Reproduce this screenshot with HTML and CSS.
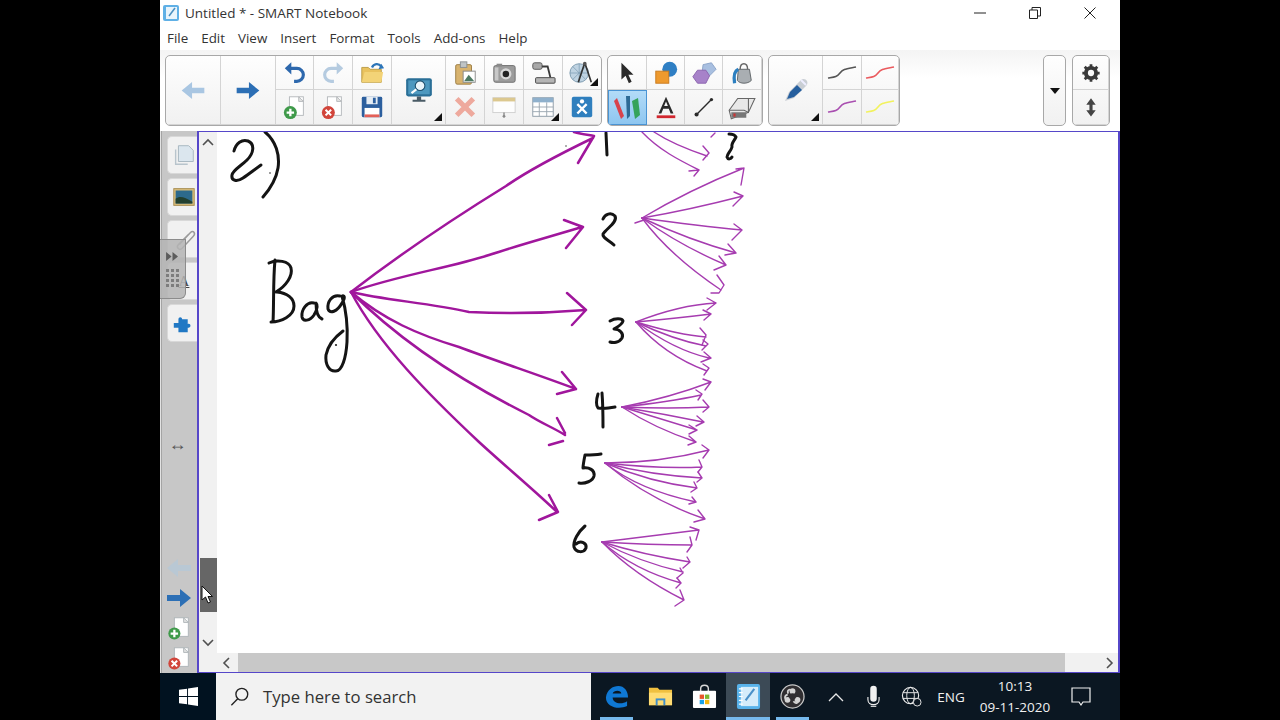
FILE: index.html
```html
<!DOCTYPE html>
<html lang="en">
<head>
<meta charset="utf-8">
<title>Untitled * - SMART Notebook</title>
<link rel="stylesheet" href="styles.css">
</head>
<body>
<svg class="defs" xmlns="http://www.w3.org/2000/svg">
  <symbol id="arrow" viewBox="0 0 24 18"><path d="M0 6H13V0L24 9L13 18V12H0Z"/></symbol>
  <symbol id="squiggle" viewBox="0 0 32 18"><path d="M2 14C8 13 11 13 14 9C17 5 20 5 30 3" fill="none" stroke="currentColor" stroke-width="1.6"/></symbol>
</svg>
<div class="window">
  <header class="title-bar">
    <svg class="app-ic" viewBox="0 0 18 18"><rect x="1" y="1" width="16" height="16" rx="2" fill="#5fb0e6"/><rect x="4" y="3" width="11" height="12" fill="#e8f4fc"/><path d="M7 12L13 4" stroke="#4a8fc0" stroke-width="1.6"/></svg>
    <span class="title-text">Untitled * - SMART Notebook</span>
    <div class="caption">
      <button class="cap"><svg viewBox="0 0 12 12"><path d="M0 6H12" stroke="#222" fill="none"/></svg></button>
      <button class="cap"><svg viewBox="0 0 12 12"><path d="M.5 3H8.5V11.500H.5ZM3 3V.5H11.500V9H8.500" stroke="#222" fill="none"/></svg></button>
      <button class="cap"><svg viewBox="0 0 12 12"><path d="M.5.5L11.500 11.500M11.500.5L.5 11.500" stroke="#222" fill="none"/></svg></button>
    </div>
  </header>
  <nav class="menu">
    <span>File</span><span>Edit</span><span>View</span><span>Insert</span><span>Format</span><span>Tools</span><span>Add-ons</span><span>Help</span>
  </nav>
  <div class="toolbar">
    <div class="group g1">
      <div class="c r2"><svg class="ic-arrow pale"><use href="#arrow"/></svg></div>
      <div class="c r2"><svg class="ic-arrow blue"><use href="#arrow"/></svg></div>
      <div class="c"><svg class="ic" viewBox="0 0 28 28"><path d="M9 9H16A6.500 6.500 0 0 1 16 23H13" fill="none" stroke="#2d68ad" stroke-width="3.400"/><path d="M10 2.500L3 9L10 15.500Z" fill="#2d68ad"/></svg></div>
      <div class="c"><svg class="ic" viewBox="0 0 28 28"><path d="M19 9H12A6.500 6.500 0 0 0 12 23H15" fill="none" stroke="#b5cbe0" stroke-width="3.400"/><path d="M18 2.500L25 9L18 15.500Z" fill="#b5cbe0"/></svg></div>
      <div class="c"><svg class="ic" viewBox="0 0 28 28"><path d="M3 8H10L12 10H24V24H3Z" fill="#e9c25e" stroke="#b99a45"/><path d="M3 24L6 13H26L24 24Z" fill="#f3d377"/><path d="M14 8C16 4 21 3 24 7" fill="none" stroke="#2d75b8" stroke-width="2.500"/><path d="M21 10L27 9L24 4Z" fill="#2d75b8"/></svg></div>
      <div class="c r2"><svg class="ic ic-lg" viewBox="0 0 28 28"><rect x="2" y="3" width="24" height="17" rx="2" fill="#2a6f97"/><rect x="4" y="5" width="20" height="13" fill="#4d98bf"/><circle cx="15" cy="10" r="4.500" fill="#eaf5fa" stroke="#1d4f6d"/><path d="M11.500 13.500L7 17" stroke="#fff" stroke-width="2"/><path d="M12 20H16V23H20V25H8V23H12Z" fill="#4a5b66"/></svg><i class="tri"></i></div>
      <div class="c"><svg class="ic" viewBox="0 0 28 28"><rect x="4" y="5" width="17" height="21" rx="1.500" fill="#d8b36e" stroke="#9a7c42"/><rect x="9" y="2" width="7" height="6" fill="#bfc4c6" stroke="#8a8f92"/><rect x="12" y="12" width="13" height="12" fill="#fff" stroke="#888"/><path d="M13 23L18 16L24 23Z" fill="#4c7a63"/></svg></div>
      <div class="c"><svg class="ic" viewBox="0 0 28 28"><rect x="3" y="6" width="23" height="18" rx="2" fill="#9c9c9c" stroke="#6e6e6e"/><rect x="6" y="4" width="6" height="3" fill="#8a8a8a"/><circle cx="16" cy="15" r="6" fill="#d8d8d8"/><circle cx="16" cy="15" r="3.500" fill="#222"/><rect x="4" y="8" width="4" height="14" fill="#c8c8c8"/></svg></div>
      <div class="c"><svg class="ic" viewBox="0 0 28 28"><rect x="3" y="3" width="10" height="7" rx="2" fill="#a8a8a8" stroke="#555"/><path d="M13 7H19L22 19" fill="none" stroke="#3a3a3a" stroke-width="2"/><rect x="6" y="19" width="21" height="6" rx="1" fill="#b5b5b5" stroke="#444"/></svg></div>
      <div class="c"><svg class="ic" viewBox="0 0 28 28"><circle cx="11" cy="14" r="10" fill="#bfd3e2" stroke="#7a98ad"/><path d="M1 14H21M11 4V24M4 7L18 21M18 7L4 21" stroke="#7d9db3" stroke-width=".8"/><path d="M17 3L10 24M17 3L24 24" stroke="#333" stroke-width="1.800" fill="none"/><circle cx="17" cy="4" r="2" fill="#555"/></svg><i class="tri"></i></div>
      <div class="c"><svg class="ic" viewBox="0 0 28 28"><rect x="8" y="3" width="15" height="20" fill="#fff" stroke="#b4b8bb"/><path d="M18 3L23 8H18Z" fill="#e4e4e4" stroke="#b4b8bb"/><circle cx="9" cy="20" r="7" fill="#3f9a4a"/><path d="M9 16V24M5 20H13" stroke="#fff" stroke-width="2.500"/></svg></div>
      <div class="c"><svg class="ic" viewBox="0 0 28 28"><rect x="8" y="3" width="15" height="20" fill="#fff" stroke="#b4b8bb"/><path d="M18 3L23 8H18Z" fill="#e4e4e4" stroke="#b4b8bb"/><circle cx="9" cy="20" r="7" fill="#d1453b"/><path d="M6 17L12 23M12 17L6 23" stroke="#fff" stroke-width="2.200"/></svg></div>
      <div class="c"><svg class="ic" viewBox="0 0 28 28"><rect x="3" y="3" width="22" height="22" rx="1.500" fill="#2c5f9e"/><rect x="8" y="3" width="12" height="8" fill="#e6edf4"/><rect x="15" y="4" width="3" height="6" fill="#2c5f9e"/><rect x="6" y="15" width="16" height="10" fill="#fff"/><rect x="6" y="22" width="16" height="3" fill="#e36058"/></svg></div>
      <div class="c"><svg class="ic" viewBox="0 0 28 28"><path d="M7 7L21 21M21 7L7 21" stroke="#eea99d" stroke-width="5.500" stroke-linecap="square"/></svg></div>
      <div class="c"><svg class="ic" viewBox="0 0 28 28"><rect x="2" y="4" width="24" height="16" fill="#fdfdfd" stroke="#cfcfcf"/><rect x="2" y="4" width="24" height="4" fill="#dcc88f"/><path d="M14 20V25" stroke="#8a8a8a" stroke-width="1.500"/><circle cx="14" cy="24" r="1.500" fill="#888"/></svg></div>
      <div class="c"><svg class="ic" viewBox="0 0 28 28"><rect x="3" y="4" width="22" height="20" fill="#fff" stroke="#8c9aa6"/><rect x="3" y="4" width="22" height="5" fill="#8fb0cc"/><path d="M3 14H25M3 19H25M10 9V24M18 9V24" stroke="#9aa6b0"/></svg><i class="tri"></i></div>
      <div class="c"><svg class="ic" viewBox="0 0 28 28"><rect x="3" y="3" width="22" height="22" rx="2" fill="#2f7fbe"/><path d="M9 11L19 21M19 11L9 21" stroke="#fff" stroke-width="2.600"/><circle cx="14" cy="8" r="2.300" fill="#fff"/></svg></div>
    </div>
    <div class="group g2">
      <div class="c"><svg class="ic" viewBox="0 0 28 28"><path d="M8 3L8 21L12.500 17L16 25L19 23.500L15.500 16H21Z" fill="#2b2b2b"/></svg></div>
      <div class="c"><svg class="ic" viewBox="0 0 28 28"><circle cx="18" cy="10" r="8" fill="#2f7fc4"/><rect x="3" y="12" width="14" height="13" fill="#ee9a2e" stroke="#c97a1c"/></svg></div>
      <div class="c"><svg class="ic" viewBox="0 0 28 28"><path d="M13 5L22 3L27 10L20 17L12 13Z" fill="#a8bfe0" stroke="#8aa3c8"/><path d="M7 11H16L20 17L16 25H7L2 18Z" fill="#a782c9" stroke="#8a62ad"/></svg></div>
      <div class="c"><svg class="ic" viewBox="0 0 28 28"><path d="M10 10H22L24 22C20 26 12 26 9 22Z" fill="#a9aeb2" stroke="#5d6266"/><path d="M12 10C12 2 20 2 20 10" fill="none" stroke="#666" stroke-width="1.500"/><path d="M10 10C5 12 5 18 6 25" fill="none" stroke="#2c7fc0" stroke-width="3.500"/></svg></div>
      <div class="c on"><svg class="ic ic-lg" viewBox="0 0 30 30"><path d="M5 6L12 24L9 27L2 9Z" fill="#d8434c"/><path d="M14 4L18 4L18 24L15 27Z" fill="#2d6a95"/><path d="M26 6L28 23L23 27L20 9Z" fill="#35a35a"/></svg></div>
      <div class="c"><svg class="ic" viewBox="0 0 28 28"><path d="M14 3L22 21H19L17 16H11L9 21H6ZM12 13H16L14 8Z" fill="#2a2a2a"/><rect x="4" y="23" width="20" height="3" fill="#d1262e"/></svg></div>
      <div class="c"><svg class="ic" viewBox="0 0 28 28"><path d="M6 22L22 6" stroke="#2a2a2a" stroke-width="1.500"/><circle cx="6" cy="22" r="2.200" fill="#2a2a2a"/><circle cx="22" cy="6" r="1.800" fill="#2a2a2a"/></svg></div>
      <div class="c"><svg class="ic ic-lg" viewBox="0 0 28 28"><path d="M2 17L10 6H26L20 19L4 25Z" fill="#e8e8e8" stroke="#666"/><path d="M2 17H16L20 19V6" fill="none" stroke="#666"/><path d="M4 19V24L18 24L18 19Z" fill="#777"/><rect x="6" y="20" width="2" height="3" fill="#c33"/></svg></div>
    </div>
    <div class="group g3">
      <div class="c r2"><svg class="ic ic-lg" viewBox="0 0 30 30"><path d="M4 26L8 17L20 5C22 3 25 4 26 6C27 8 26 10 25 11L13 23Z" fill="#c9ced4"/><path d="M6 24L9 17L16 10L21 15L13 22Z" fill="#265f9e"/><path d="M20 5L25 10" stroke="#eef" stroke-width="2"/></svg><i class="tri"></i></div>
      <div class="c"><svg class="sq dark"><use href="#squiggle"/></svg></div>
      <div class="c"><svg class="sq red"><use href="#squiggle"/></svg></div>
      <div class="c"><svg class="sq purple"><use href="#squiggle"/></svg></div>
      <div class="c"><svg class="sq yellow"><use href="#squiggle"/></svg></div>
    </div>
    <div class="spacer"></div>
    <div class="group g4"><i class="caret"></i></div>
    <div class="group g5">
      <div class="c"><svg class="ic ic-sm" viewBox="0 0 28 28"><circle cx="14" cy="14" r="6.500" fill="none" stroke="#3a3a3a" stroke-width="5"/><path d="M14 3V25M3 14H25M6 6L22 22M22 6L6 22" stroke="#3a3a3a" stroke-width="3.500"/><circle cx="14" cy="14" r="4" fill="#fafafa"/></svg></div>
      <div class="c"><svg class="ic ic-sm" viewBox="0 0 28 28"><path d="M14 3L20 11H16V18H20L14 26L8 18H12V11H8Z" fill="#444"/></svg></div>
    </div>
  </div>
  <main class="main">
    <aside class="side">
      <div class="tabs">
        <div class="tab"><svg class="ic" viewBox="0 0 28 28"><path d="M8 4H19L24 9V21H8Z" fill="#dbe6ee" stroke="#a5b4be"/><path d="M5 8V24H18" fill="none" stroke="#b8c4cc" stroke-width="1.500"/></svg></div>
        <div class="tab"><svg class="ic" viewBox="0 0 28 28"><rect x="3" y="5" width="22" height="18" fill="#d8bc7a" stroke="#a78c4f"/><rect x="5" y="7" width="18" height="14" fill="#2d6a8c"/><path d="M5 21V16C10 12 15 15 23 19V21Z" fill="#22402f"/></svg></div>
        <div class="tab"><svg class="ic" viewBox="0 0 28 28"><path d="M9 20L21 7C24 4 27 8 24 11L12 24C9 27 5 23 8 20L19 9" fill="none" stroke="#9a9a9a" stroke-width="1.600"/></svg></div>
        <div class="tab"><span class="tab-a">A</span></div>
        <div class="tab"><svg class="ic" viewBox="0 0 28 28"><path d="M3 14H8V10C8 7 12 7 12 10H18V15C22 14 22 20 18 19V24H8V19H3Z" fill="#2178c4"/></svg></div>
      </div>
      <div class="handle">
        <svg class="ff" viewBox="0 0 14 12"><path d="M0 1L6 6L0 11ZM7 1L13 6L7 11Z" fill="#5c5c5c"/></svg>
        <div class="dots"><i></i><i></i><i></i><i></i><i></i><i></i><i></i><i></i><i></i><i></i><i></i><i></i></div>
      </div>
      <div class="side-mid"><span class="lr">↔</span></div>
      <div class="nav"><svg class="ic-arrow pale2"><use href="#arrow"/></svg></div>
      <div class="nav"><svg class="ic-arrow blue"><use href="#arrow"/></svg></div>
      <div class="nav"><svg class="ic" viewBox="0 0 28 28"><rect x="9" y="3" width="15" height="20" fill="#fff" stroke="#aeb4b8"/><path d="M19 3L24 8H19Z" fill="#e4e4e4" stroke="#aeb4b8"/><circle cx="9" cy="20" r="6.500" fill="#3f9a4a"/><path d="M9 16V24M5 20H13" stroke="#fff" stroke-width="2.400"/></svg></div>
      <div class="nav"><svg class="ic" viewBox="0 0 28 28"><rect x="9" y="3" width="15" height="20" fill="#fff" stroke="#aeb4b8"/><path d="M19 3L24 8H19Z" fill="#e4e4e4" stroke="#aeb4b8"/><circle cx="9" cy="20" r="6.500" fill="#d1453b"/><path d="M6 17L12 23M12 17L6 23" stroke="#fff" stroke-width="2.200"/></svg></div>
    </aside>
    <section class="canvas">
      <div class="vscroll">
        <svg class="chev" viewBox="0 0 12 12"><path d="M1 8L6 3L11 8" fill="none" stroke="#505050" stroke-width="1.600"/></svg>
        <div class="thumb">
          <svg class="cursor" viewBox="0 0 12 19"><path d="M1 1V15L4.500 12L7 18L9.500 17L7 11.500H11.500Z" fill="#fff" stroke="#111"/></svg>
        </div>
        <svg class="chev" viewBox="0 0 12 12"><path d="M1 4L6 9L11 4" fill="none" stroke="#505050" stroke-width="1.600"/></svg>
      </div>
      <svg class="ink" viewBox="218 132 899 521">
        <g class="black">
          <path d="M235 151C237 143 243 139 249 141C256 144 255 153 248 160C242 166 234 170 233 175C232 181 238 182 244 178C250 174 255 170 262 165"/>
          <path d="M266 132C277 141 281 155 279 168C277 180 271 189 264 197"/>
          <path d="M270 263C278 259 290 261 292 268C294 276 287 286 277 292M276 260C274 280 275 305 274 322M272 322C282 322 295 316 295 306C295 298 288 293 278 292"/>
          <path d="M315 303C308 301 302 310 303 317C304 322 311 321 315 315C318 310 319 305 317 303C317 310 318 317 323 319"/>
          <path d="M341 296C333 294 328 302 329 309C331 314 338 312 343 303C347 297 345 295 343 296C347 310 349 325 348 342C347 358 343 371 337 371C330 372 326 364 327 355C329 345 336 337 344 331"/>
          <path d="M607 133L608 155"/>
          <path d="M604 219C606 214 612 212 616 216C619 222 608 228 604 234C603 238 610 240 615 245" />
          <path d="M611 321C616 318 623 318 624 321C623 325 618 327 615 329C621 329 625 334 623 338C620 343 614 343 611 342"/>
          <path d="M599 394C597 400 597 406 599 408C604 409 611 408 616 407M603 393C604 405 604 416 604 427"/>
          <path d="M602 454C596 455 590 455 586 455C585 460 584 465 584 468C590 467 596 470 595 476C594 481 586 484 580 483"/>
          <path d="M586 526C579 532 574 541 575 547C577 553 585 553 587 548C588 543 582 540 577 544"/>
          <path d="M730 134C733 134 736 135 737 137C736 140 732 143 733 147C732 151 728 154 728 157C729 160 732 159 733 157"/>
        </g>
        <circle class="speck" cx="337" cy="345" r="1.100"/>
        <circle class="speck" cx="271" cy="173" r=".8"/>
        <circle class="speck" cx="567" cy="146" r=".7"/>
        <g class="main-arrow">
          <path d="M352 292C400 255 460 215 507 186C530 170 565 152 594 138M575 132C582 134 590 135 595 136L579 163"/>
          <path d="M352 292C400 275 450 268 490 255C520 245 550 237 583 227M565 220L584 227L567 248"/>
          <path d="M352 292C385 300 430 303 470 312C510 314 550 313 587 310M568 293L587 310L573 325"/>
          <path d="M352 292C385 320 420 335 460 347C500 362 540 375 577 389M563 372L577 389L558 394"/>
          <path d="M352 292C395 335 450 375 530 415C540 422 555 428 566 435M558 418L566 433M550 445L564 441"/>
          <path d="M352 292C380 345 430 395 480 442C505 465 535 490 558 512M550 495L559 512L540 520"/>
        </g>
        <g class="fan">
          <path d="M643 132C660 150 680 160 700 170M690 171L700 170L695 176"/>
          <path d="M655 132C670 142 690 150 708 156M704 146L710 153L704 160"/>
          <path d="M712 137L716 133"/>
          <path d="M643 218Q690 190 745 168M737 169L745 168L742 185"/>
          <path d="M643 218Q690 210 744 196M735 192L744 196L734 206"/>
          <path d="M643 218Q700 226 743 230M735 224L743 230L733 240"/>
          <path d="M643 218Q690 240 737 253M729 244L737 253L726 255"/>
          <path d="M643 218Q680 245 727 265M720 256L727 265L715 270"/>
          <path d="M643 218Q670 255 722 290M718 275L725 285L720 293L712 293"/>
          <path d="M636 223L645 220"/>
          <path d="M637 322Q680 305 717 303M708 298L717 303L708 310"/>
          <path d="M637 322Q680 318 712 314M704 310L712 314L705 320"/>
          <path d="M637 322Q680 335 707 337M701 328L707 335L703 345"/>
          <path d="M637 322Q675 340 707 346M704 340L709 344L703 350"/>
          <path d="M637 322Q675 350 710 358M705 352L712 358L702 362"/>
          <path d="M637 322Q665 355 708 371M704 364L710 368L705 375"/>
          <path d="M623 407Q670 398 712 382M704 379L712 382L706 390"/>
          <path d="M623 407Q670 402 702 395M697 390L703 394L699 400"/>
          <path d="M623 407Q670 409 709 407M704 400L710 407L704 412"/>
          <path d="M623 407Q665 414 704 422M698 416L705 422L697 426"/>
          <path d="M623 407Q665 420 698 430M690 425L698 430L690 434"/>
          <path d="M623 407Q655 428 697 442M690 436L697 442L689 445"/>
          <path d="M606 463Q660 463 710 450M703 445L710 450L704 458"/>
          <path d="M606 463Q660 469 703 467M700 460L703 467L699 472"/>
          <path d="M606 463Q650 475 703 478M699 472L703 478L698 482"/>
          <path d="M606 463Q650 482 698 488M695 482L698 488L692 492"/>
          <path d="M606 463Q640 490 697 502M693 497L697 502L690 504"/>
          <path d="M606 463Q650 500 706 519M699 510L706 519L695 522"/>
          <path d="M603 542Q650 536 700 530M691 527L700 530L697 540"/>
          <path d="M603 542Q650 545 693 545M691 537L693 545L688 552"/>
          <path d="M603 542Q645 555 691 562M688 557L691 562L684 568"/>
          <path d="M603 542Q640 562 684 572M681 568L684 573L678 578"/>
          <path d="M603 542Q635 570 682 583M678 578L682 583L677 588"/>
          <path d="M603 542Q635 575 685 600M681 590L685 600L676 606"/>
        </g>
      </svg>
      <div class="hscroll">
        <svg class="chev-h" viewBox="0 0 12 12"><path d="M8 1L3 6L8 11" fill="none" stroke="#505050" stroke-width="1.600"/></svg>
        <div class="htrack"></div>
        <svg class="chev-h" viewBox="0 0 12 12"><path d="M4 1L9 6L4 11" fill="none" stroke="#505050" stroke-width="1.600"/></svg>
      </div>
    </section>
  </main>
  <footer class="taskbar">
    <div class="start"><svg viewBox="0 0 20 20"><path d="M0 3L8.500 1.800V9.500H0ZM9.500 1.600L20 0V9.500H9.500ZM0 10.500H8.500V18.200L0 17ZM9.500 10.500H20V20L9.500 18.400Z" fill="#fff"/></svg></div>
    <div class="search">
      <svg class="search-ic" viewBox="0 0 22 22"><circle cx="13" cy="8" r="6.500" fill="none" stroke="#222" stroke-width="1.500"/><path d="M8.500 13L1.500 20" stroke="#222" stroke-width="1.500"/></svg>
      <span>Type here to search</span>
    </div>
    <div class="tb run narrow"><svg class="tb-ic" viewBox="0 0 26 26"><path d="M2 14C3 6 9 2 15 2C21 2 25 7 25 14H9C9 20 18 22 24 18V23C15 27 2 24 2 14ZM9 10H18C18 6 10 6 9 10Z" fill="#0f78d4"/></svg></div>
    <div class="tb"><svg class="tb-ic" viewBox="0 0 26 26"><path d="M1 4H10L12 6H25V22H1Z" fill="#f0c040"/><path d="M1 9H25V22H1Z" fill="#ffdc73"/><path d="M8 15H18V22H8Z" fill="#3f8ecb"/><rect x="10" y="17" width="6" height="5" fill="#ffdc73"/></svg></div>
    <div class="tb"><svg class="tb-ic" viewBox="0 0 26 26"><path d="M9 8V5C9 0 17 0 17 5V8" fill="none" stroke="#d8d8d8" stroke-width="1.500"/><rect x="1" y="7" width="24" height="18" rx="1" fill="#fff"/><rect x="8" y="11" width="4.500" height="4.500" fill="#e8562a"/><rect x="13.500" y="11" width="4.500" height="4.500" fill="#7cb82f"/><rect x="8" y="16.500" width="4.500" height="4.500" fill="#1aa1e8"/><rect x="13.500" y="16.500" width="4.500" height="4.500" fill="#f6b60f"/></svg></div>
    <div class="tb run active"><svg class="tb-ic" viewBox="0 0 26 26"><rect x="1" y="0" width="24" height="26" rx="2" fill="#58b2ea"/><rect x="5" y="3" width="18" height="20" fill="#d5ecfa"/><path d="M10 17L19 5" stroke="#4a90c8" stroke-width="2.200"/><path d="M3 5H7M3 9H7M3 13H7M3 17H7M3 21H7" stroke="#fff" stroke-width="1.200"/></svg></div>
    <div class="tb run narrow"><svg class="tb-ic" viewBox="0 0 26 26"><circle cx="13" cy="13" r="12" fill="#302e31" stroke="#c9c9c9" stroke-width="1.300"/><path d="M13 7.500C10 4.500 7 6 8.500 10M8 16.500C4 16 4.500 12 8 11M18.200 16.500C20 20 16 21 14 18" fill="none" stroke="#d4d4d4" stroke-width="1.800"/><circle cx="13" cy="7.500" r="3" fill="#d4d4d4"/><circle cx="7.800" cy="16.500" r="3" fill="#d4d4d4"/><circle cx="18.200" cy="16.500" r="3" fill="#d4d4d4"/><circle cx="13" cy="13" r="3.500" fill="#302e31"/></svg></div>
    <div class="tb"><svg class="tray-ic" viewBox="0 0 16 10"><path d="M1 9L8 2L15 9" fill="none" stroke="#e8e8e8" stroke-width="1.300"/></svg></div>
    <div class="tray mic"><svg class="mic-ic" viewBox="0 0 14 24"><rect x="3.500" y="0" width="7" height="17" rx="3.500" fill="#f2f2f2"/><path d="M1 12V15C1 22 13 22 13 15V12" fill="none" stroke="#f2f2f2" stroke-width="1.200"/><path d="M4 22H10" stroke="#f2f2f2" stroke-width="1.200"/></svg></div>
    <div class="tray globe"><svg class="globe-ic" viewBox="0 0 22 22"><circle cx="10" cy="10" r="8.500" fill="none" stroke="#e8e8e8" stroke-width="1.200"/><ellipse cx="10" cy="10" rx="4" ry="8.500" fill="none" stroke="#e8e8e8"/><path d="M2 7H18M2 13H18" stroke="#e8e8e8"/><circle cx="17" cy="17" r="4" fill="#0c1722" stroke="#e8e8e8"/></svg></div>
    <div class="tray eng">ENG</div>
    <div class="tray clock"><span>10:13</span><span>09-11-2020</span></div>
    <div class="tray notify"><svg class="note-ic" viewBox="0 0 20 20"><path d="M1 1H19V15H12L10 18L8 15H1Z" fill="none" stroke="#f0f0f0" stroke-width="1.200"/></svg></div>
  </footer>
</div>
</body>
</html>
```

FILE: styles.css
```css
* { box-sizing: border-box; }
html, body { margin: 0; height: 100%; }
body {
  background: #000;
  display: flex;
  justify-content: center;
  font-family: "Open Sans", "Noto Sans", sans-serif;
  overflow: hidden;
}
.defs { display: none; }
.window {
  width: 960px;
  height: 720px;
  background: #fff;
  display: flex;
  flex-direction: column;
}

/* Title and menu */
.title-bar {
  height: 26px;
  display: flex;
  align-items: center;
  padding-left: 2px;
  background: #fff;
  flex: none;
}
.app-ic { width: 18px; height: 18px; margin-right: 5px; }
.title-text { font-size: 13.5px; color: #333; }
.caption { margin-left: auto; display: flex; padding-right: 3px; }
.cap {
  width: 55px;
  height: 26px;
  border: 0;
  background: none;
  padding: 0;
  display: flex;
  align-items: center;
  justify-content: center;
}
.cap svg { width: 12px; height: 12px; }
.menu {
  height: 24px;
  flex: none;
  display: flex;
  align-items: center;
  gap: 13px;
  padding-left: 7px;
  font-size: 13.4px;
  color: #333;
}

/* Toolbar */
.toolbar {
  height: 81px;
  flex: none;
  display: flex;
  gap: 5px;
  padding: 5px 10px 5px 5px;
  background: linear-gradient(#f4f4f4, #fff 35%);
}
.spacer { flex: 1; }
.group {
  height: 71px;
  border: 1px solid #a8a8a8;
  border-radius: 5px;
  background: linear-gradient(#fefefe, #f1f1f1);
  display: grid;
  grid-template-rows: 1fr 1fr;
  grid-auto-flow: column;
  overflow: hidden;
}
.g1 {
  width: 437px;
  grid-template-columns: 55px 55px 38px 39px 39px 54px 39px 39px 39px 39px;
  grid-template-rows: 34px 35px;
  grid-auto-flow: row;
}
.g1 .r2:nth-child(1) { grid-column: 1; grid-row: 1 / 3; }
.g1 .r2:nth-child(2) { grid-column: 2; grid-row: 1 / 3; }
.g1 .r2:nth-child(6) { grid-column: 6; grid-row: 1 / 3; }
.g1 .c:nth-child(3) { grid-area: 1 / 3; }
.g1 .c:nth-child(4) { grid-area: 1 / 4; }
.g1 .c:nth-child(5) { grid-area: 1 / 5; }
.g1 .c:nth-child(7) { grid-area: 1 / 7; }
.g1 .c:nth-child(8) { grid-area: 1 / 8; }
.g1 .c:nth-child(9) { grid-area: 1 / 9; }
.g1 .c:nth-child(10) { grid-area: 1 / 10; }
.g1 .c:nth-child(11) { grid-area: 2 / 3; }
.g1 .c:nth-child(12) { grid-area: 2 / 4; }
.g1 .c:nth-child(13) { grid-area: 2 / 5; }
.g1 .c:nth-child(14) { grid-area: 2 / 7; }
.g1 .c:nth-child(15) { grid-area: 2 / 8; }
.g1 .c:nth-child(16) { grid-area: 2 / 9; }
.g1 .c:nth-child(17) { grid-area: 2 / 10; }
.g2 {
  width: 156px;
  grid-template-columns: 39px 38px 38px 39px;
  grid-template-rows: 34px 35px;
  grid-auto-flow: row;
}
.g3 {
  width: 132px;
  grid-template-columns: 54px 39px 37px;
  grid-template-rows: 34px 35px;
  grid-auto-flow: row;
}
.g3 .r2 { grid-row: 1 / 3; }
.g4 {
  width: 23px;
  display: flex;
  align-items: center;
  justify-content: center;
  margin-right: 1px;
}
.g5 { width: 38px; grid-template-rows: 34px 35px; }
.c {
  position: relative;
  display: flex;
  align-items: center;
  justify-content: center;
  border-right: 1px solid #d4d4d4;
  border-bottom: 1px solid #d4d4d4;
}
.on {
  background: linear-gradient(#b4dcf8, #8ec6f0);
  outline: 1px solid #4a94d4;
  outline-offset: -1px;
}
.ic { width: 26px; height: 26px; display: block; }
.ic-lg { width: 30px; height: 30px; }
.ic-sm { width: 22px; height: 22px; }
.ic-arrow { width: 24px; height: 17px; display: block; }
.pale { fill: #a9c6e2; transform: scaleX(-1); }
.pale2 { fill: #b9c8d4; transform: scaleX(-1); }
.blue { fill: #2c6fb5; }
.sq { width: 32px; height: 18px; }
.dark { color: #555; }
.red { color: #ea5a5e; }
.purple { color: #a94fb0; }
.yellow { color: #f2f25e; }
.tri {
  position: absolute;
  right: 3px;
  bottom: 3px;
  border-style: solid;
  border-width: 0 0 8px 8px;
  border-color: transparent transparent #111 transparent;
}
.caret {
  border-style: solid;
  border-width: 6px 5px 0;
  border-color: #111 transparent transparent;
}

/* Main */
.main {
  flex: 1;
  display: flex;
  min-height: 0;
  position: relative;
}
.side {
  width: 37px;
  flex: none;
  background: #c7c7c7;
  border-left: 1px solid #e2e2e2;
  box-shadow: inset 1px 0 #a4a4a4;
  display: flex;
  flex-direction: column;
}
.tabs {
  display: flex;
  flex-direction: column;
  gap: 4px;
  padding: 5px 0 0 6px;
}
.tab {
  height: 38px;
  background: #f1f1f1;
  border: 1px solid #d8d8d8;
  border-right: 0;
  border-radius: 5px 0 0 5px;
  display: flex;
  align-items: center;
  justify-content: center;
  padding-left: 3px;
}
.tab-a { font: 15px "Liberation Serif", serif; color: #444; text-decoration: underline; }
.handle {
  position: absolute;
  left: 0;
  top: 108px;
  width: 26px;
  height: 60px;
  background: rgba(180, 180, 180, .85);
  border: 1px solid #8c8c8c;
  border-left: 0;
  border-radius: 0 0 6px 0;
  display: flex;
  flex-direction: column;
  align-items: center;
  gap: 7px;
  padding-top: 11px;
}
.ff { width: 13px; height: 11px; }
.dots { display: grid; grid-template-columns: repeat(3, 3px); gap: 2px; }
.dots i { width: 3px; height: 3px; background: #7d7d7d; }
.side-mid {
  flex: 1;
  display: flex;
  align-items: center;
  justify-content: center;
  padding-bottom: 9px;
}
.lr { font-size: 18px; line-height: 20px; color: #555; padding-right: 3px; }
.nav {
  height: 30px;
  flex: none;
  display: flex;
  align-items: center;
  justify-content: center;
}
.nav .ic { width: 26px; height: 26px; }
.nav .ic-arrow { width: 24px; height: 18px; }

.canvas {
  flex: 1;
  min-width: 0;
  display: grid;
  grid-template-columns: 18px 1fr;
  grid-template-rows: 1fr 19px;
  border: solid #5647c9;
  border-width: 1px 2px 1px 2px;
  background: #fff;
}
.vscroll {
  grid-row: 1 / 3;
  background: #f1f1f1;
  display: flex;
  flex-direction: column;
  padding-bottom: 19px;
}
.chev { width: 12px; height: 12px; margin: 5px 3px; flex: none; }
.thumb {
  width: 17px;
  height: 54px;
  margin: auto 0 19px 1px;
  background: #666;
  position: relative;
}
.cursor {
  position: absolute;
  left: 1px;
  top: 27px;
  width: 12px;
  height: 19px;
  overflow: visible;
}
.ink {
  width: 899px;
  height: 521px;
  display: block;
  fill: none;
  stroke-linecap: round;
  stroke-linejoin: round;
}
.black { stroke: #141414; stroke-width: 3; }
.speck { fill: #222; }
.main-arrow { stroke: #a0169c; stroke-width: 2.5; }
.fan { stroke: #a63cb0; stroke-width: 1.4; }
.hscroll {
  display: flex;
  align-items: center;
  background: #f1f1f1;
}
.chev-h { width: 12px; height: 12px; margin: 0 4px; flex: none; }
.htrack { width: 827px; height: 100%; background: #c8c8c8; }
.hscroll .chev-h:first-child { margin-right: 5px; }
.hscroll .chev-h:last-child { margin-left: auto; margin-right: 3px; }

/* Taskbar */
.taskbar {
  height: 47px;
  flex: none;
  background: #0b1722;
  display: flex;
  align-items: stretch;
  color: #f0f0f0;
}
.start {
  width: 56px;
  background: #011220;
  display: flex;
  align-items: center;
  justify-content: center;
}
.start svg { width: 19px; height: 19px; }
.search {
  width: 375px;
  margin-right: 3px;
  background: #f2f2f2;
  color: #333;
  display: flex;
  align-items: center;
  padding-left: 14px;
  gap: 13px;
  font-size: 16.7px;
}
.search-ic { width: 20px; height: 20px; }
.tb {
  width: 44px;
  display: flex;
  align-items: center;
  justify-content: center;
  position: relative;
}
.tb-ic { width: 25px; height: 25px; }
.tray-ic { width: 16px; height: 10px; }
.active { background: #3c4a56; }
.run::after {
  content: "";
  position: absolute;
  left: 0;
  right: 0;
  bottom: 0;
  height: 3px;
  background: #76b9ed;
}
.narrow::after { left: 6px; right: 5px; }
.tray { display: flex; align-items: center; justify-content: center; }
.mic { width: 30px; }
.mic-ic { width: 13px; height: 24px; }
.globe { width: 46px; }
.globe-ic { width: 21px; height: 21px; }
.eng { width: 34px; font-size: 13.5px; }
.clock {
  width: 94px;
  flex-direction: column;
  font-size: 13.5px;
  line-height: 21px;
}
.notify { width: 38px; }
.note-ic { width: 20px; height: 20px; }
```
